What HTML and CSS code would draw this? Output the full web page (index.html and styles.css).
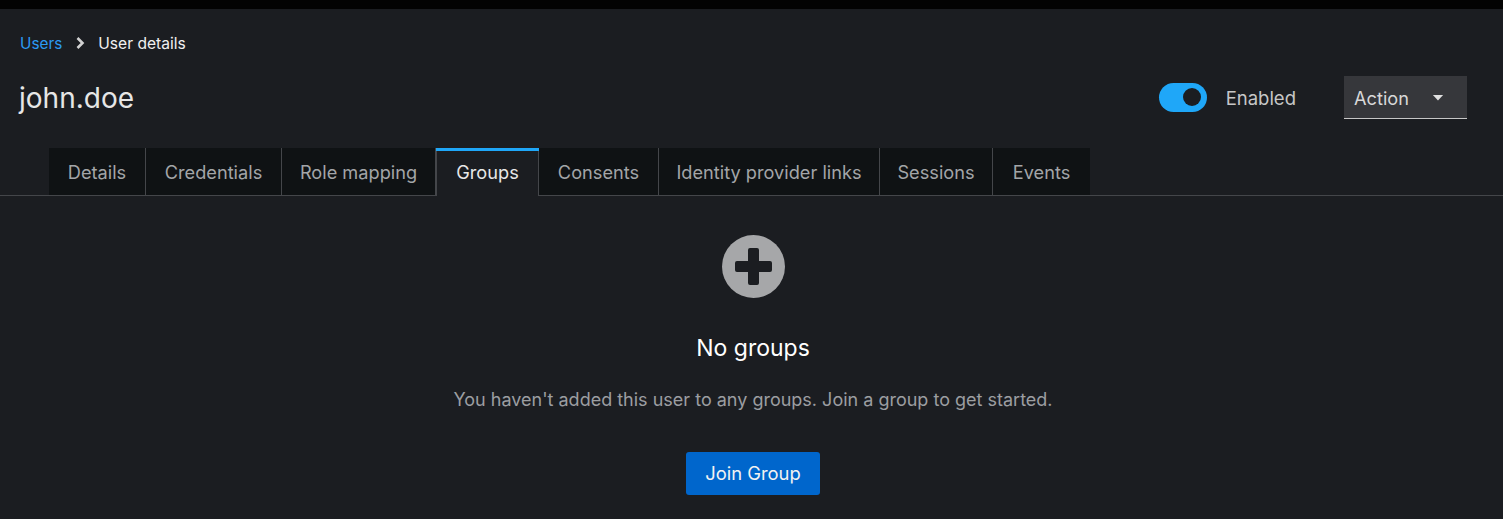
FILE: index.html
```html
<!DOCTYPE html>
<html lang="en">

<head>
    <meta charset="UTF-8">
    <meta name="viewport" content="width=device-width, initial-scale=1.0">
    <link rel="stylesheet" href="styles.css">
    <title>User details</title>
</head>

<body>
    <div class="topbar"></div>

    <nav class="breadcrumb">
        <a class="crumb-link" href="#">Users</a>
        <svg class="crumb-sep" viewBox="0 0 10 14" width="10" height="14">
            <path d="M2.5 2 L7.5 7 L2.5 12" fill="none" stroke="#d2d2d2" stroke-width="2.6"/>
        </svg>
        <span class="crumb-current">User details</span>
    </nav>

    <header class="page-head">
        <h1 class="title">john.doe</h1>
        <div class="head-actions">
            <div class="switch">
                <span class="switch-track"><span class="switch-knob"></span></span>
                <span class="switch-label">Enabled</span>
            </div>
            <button class="action-toggle">
                <span class="action-label">Action</span>
                <svg class="caret" viewBox="0 0 14 8" width="12" height="7">
                    <path d="M1 1 H13 L7 7.5 Z" fill="#e0e0e0"/>
                </svg>
            </button>
        </div>
    </header>

    <div class="tabs">
        <a class="tab tab-details" href="#">Details</a>
        <a class="tab tab-credentials" href="#">Credentials</a>
        <a class="tab tab-roles" href="#">Role mapping</a>
        <a class="tab tab-groups active" href="#">Groups</a>
        <a class="tab tab-consents" href="#">Consents</a>
        <a class="tab tab-identity" href="#">Identity provider links</a>
        <a class="tab tab-sessions" href="#">Sessions</a>
        <a class="tab tab-events" href="#">Events</a>
    </div>

    <main class="empty">
        <svg class="empty-icon" viewBox="0 0 63 63" width="63" height="63">
            <circle cx="31.5" cy="31.5" r="31.5" fill="#a6a7a9"/>
            <path d="M26 15 a2 2 0 0 1 2 -2 h7 a2 2 0 0 1 2 2 v11 h11 a2 2 0 0 1 2 2 v7 a2 2 0 0 1 -2 2 h-11 v11 a2 2 0 0 1 -2 2 h-7 a2 2 0 0 1 -2 -2 v-11 h-11 a2 2 0 0 1 -2 -2 v-7 a2 2 0 0 1 2 -2 h11 Z" fill="#1b1d21"/>
        </svg>
        <h2 class="empty-title">No groups</h2>
        <p class="empty-text">You haven't added this user to any groups. Join a group to get started.</p>
        <button class="primary">Join Group</button>
    </main>
</body>

</html>
```

FILE: styles.css
```css
* {
    margin: 0;
    padding: 0;
    box-sizing: border-box;
}

body {
    background: #1b1d21;
    font-family: "Inter", "Noto Sans", sans-serif;
    color: #e0e0e0;
    overflow: hidden;
}

.topbar {
    height: 9px;
    background: #030303;
}

.breadcrumb {
    display: flex;
    align-items: center;
    height: 22px;
    margin-top: 23px;
    padding-left: 20px;
    font-size: 15.3px;
}

.crumb-link {
    color: #2b9af3;
    text-decoration: none;
}

.crumb-sep {
    margin: 0 13px 0 13px;
}

.crumb-current {
    font-size: 15.6px;
    color: #f0f0f0;
}

.page-head {
    display: flex;
    justify-content: space-between;
    align-items: center;
    height: 44px;
    margin-top: 21px;
    padding: 0 36px 0 19px;
}

.title {
    padding-top: 2px;
    font-size: 28px;
    font-weight: 400;
    color: #e6e6e6;
}

.head-actions {
    display: flex;
    align-items: center;
}

.switch {
    display: flex;
    align-items: center;
    gap: 19px;
    margin-right: 48px;
}

.switch-track {
    display: flex;
    align-items: center;
    justify-content: flex-end;
    width: 48px;
    height: 29px;
    padding-right: 6px;
    border-radius: 15px;
    background: #1fa7f8;
}

.switch-knob {
    width: 18px;
    height: 18px;
    border-radius: 50%;
    background: #1b1d21;
}

.switch-label {
    padding-top: 2px;
    font-size: 18.5px;
    color: #c7c7c7;
}

.action-toggle {
    display: flex;
    align-items: center;
    justify-content: space-between;
    width: 123px;
    height: 43px;
    padding: 0 23px 0 10px;
    border: 0;
    border-bottom: 1px solid #c7c7c7;
    background: #36373b;
    color: #d8d8d8;
    font: inherit;
    font-size: 18.2px;
}

.action-label {
    padding-top: 3px;
}

.caret {
    margin-top: 1px;
}

.tabs {
    display: flex;
    height: 48px;
    margin-top: 29px;
    padding-left: 49px;
    border-bottom: 1px solid #44464a;
}

.tab {
    display: flex;
    align-items: center;
    justify-content: center;
    height: 47px;
    padding-top: 1px;
    background: #0f1214;
    border-right: 1px solid #44464a;
    color: #a3a5a8;
    font-size: 18.2px;
    text-decoration: none;
}

.tab-details { width: 97px; }
.tab-credentials { width: 136px; }
.tab-roles { width: 154px; }
.tab-groups { width: 103px; }
.tab-consents { width: 120px; }
.tab-identity { width: 221px; }
.tab-sessions { width: 113px; }
.tab-events { width: 97px; border-right: 0; }

.tab.active {
    position: relative;
    height: 48px;
    padding-bottom: 1px;
    background: #1b1d21;
    border-left: 1px solid #44464a;
    color: #e8e8e8;
}

.tab.active::before {
    content: "";
    position: absolute;
    top: 0;
    left: -1px;
    right: -1px;
    height: 3px;
    background: #1fa7f8;
}

.empty {
    display: flex;
    flex-direction: column;
    align-items: center;
    padding-top: 39px;
    padding-left: 3px;
}

.empty-title {
    margin-top: 34px;
    font-size: 23px;
    font-weight: 400;
    line-height: 32px;
    color: #fff;
}

.empty-text {
    margin-top: 23px;
    font-size: 18px;
    line-height: 26px;
    color: #9c9ea1;
}

.primary {
    width: 134px;
    height: 43px;
    margin-top: 39px;
    padding-bottom: 2px;
    border: 0;
    border-radius: 3px;
    background: #0066cc;
    color: #f2f2f2;
    font: inherit;
    font-size: 18.4px;
}
```
